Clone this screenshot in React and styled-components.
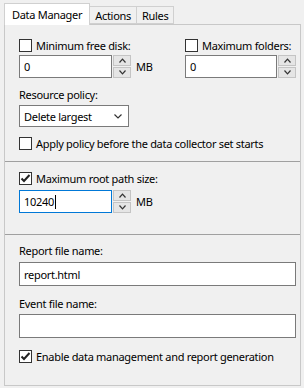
import React from "react";
import styled, { createGlobalStyle } from "styled-components";

const Global = createGlobalStyle`
  html, body {
    margin: 0;
    padding: 0;
    background: #f0f0f0;
  }
  body {
    font-family: "Noto Sans", "DejaVu Sans", sans-serif;
    font-size: 11px;
    letter-spacing: -0.3px;
    color: #000;
  }
`;

const Window = styled.div`
  width: 304px;
  height: 388px;
  padding: 3px 3px 0 4px;
  box-sizing: border-box;
  display: flex;
  flex-direction: column;
`;

const TabStrip = styled.div`
  display: flex;
  align-items: flex-end;
  height: 21px;
  position: relative;
  z-index: 1;
`;

const Tab = styled.div`
  height: ${(p) => (p.$active ? "22px" : "18px")};
  padding: 0 ${(p) => (p.$active ? "7px" : "5px")};
  margin-bottom: ${(p) => (p.$active ? "-1px" : "0")};
  margin-left: ${(p) => (p.$active ? "0" : "-1px")};
  background: ${(p) => (p.$active ? "#ffffff" : "#f0f0f0")};
  border: 1px solid #d0d0d0;
  border-bottom: ${(p) => (p.$active ? "none" : "1px solid #d0d0d0")};
  display: flex;
  align-items: center;
  box-sizing: border-box;
`;

const Panel = styled.div`
  width: 297px;
  height: 362px;
  box-sizing: border-box;
  border: 1px solid #c8c8c8;
  display: flex;
  flex-direction: column;
`;

const Section = styled.div`
  display: flex;
  flex-direction: column;
  padding: ${(p) => p.$pad || "0"} 0 0 14px;
`;

const Separator = styled.div`
  height: 1px;
  background: #a0a0a0;
  margin-top: ${(p) => p.$top || 0}px;
`;

const Columns = styled.div`
  display: grid;
  grid-template-columns: 166px 1fr;
`;

const Field = styled.div`
  display: flex;
  flex-direction: column;
`;

const CheckRow = styled.label`
  display: flex;
  align-items: center;
  gap: 4px;
  height: 16px;
  margin-top: ${(p) => p.$top || 0}px;
  white-space: nowrap;
`;

const Box = styled.span`
  width: 13px;
  height: 13px;
  box-sizing: border-box;
  border: 1px solid #333333;
  background: #ffffff;
  display: inline-flex;
  align-items: center;
  justify-content: center;
  flex: none;
`;

const Label = styled.div`
  height: 16px;
  line-height: 16px;
  margin-top: ${(p) => p.$top || 0}px;
`;

const SpinRow = styled.div`
  display: flex;
  align-items: center;
  margin-top: ${(p) => p.$top || 0}px;
`;

const TextBox = styled.div`
  width: ${(p) => p.$w}px;
  height: ${(p) => p.$h || 23}px;
  box-sizing: border-box;
  background: #ffffff;
  border: 1px solid ${(p) => (p.$focus ? "#0078d7" : "#7a7a7a")};
  display: flex;
  align-items: center;
  padding-left: 4px;
  margin-top: ${(p) => p.$top || 0}px;
`;

const Caret = styled.span`
  display: inline-block;
  width: 1px;
  height: 14px;
  background: #000;
  margin-left: 1px;
`;

const Spinner = styled.div`
  width: 18px;
  height: 23px;
  display: flex;
  flex-direction: column;
  gap: 1px;
  margin-left: 1px;
`;

const SpinBtn = styled.div`
  flex: 1;
  background: #e5e5e5;
  border: 1px solid #c4c4c4;
  display: flex;
  align-items: center;
  justify-content: center;
`;

const Unit = styled.span`
  margin-left: 5px;
`;

const Select = styled.div`
  width: 110px;
  height: 22px;
  box-sizing: border-box;
  background: #ffffff;
  border: 1px solid #7a7a7a;
  display: flex;
  align-items: center;
  justify-content: space-between;
  padding: 0 6px 0 4px;
  margin-top: 2px;
`;

const Check = ({ checked }) => (
  <Box>
    {checked && (
      <svg width="11" height="11" viewBox="0 0 11 11">
        <path d="M1.5 5.5 L4 8 L9.5 2" fill="none" stroke="#222" strokeWidth="2" />
      </svg>
    )}
  </Box>
);

const Arrow = ({ up }) => (
  <svg width="7" height="5" viewBox="0 0 7 5">
    <path d={up ? "M0.5 4.5 L3.5 1.2 L6.5 4.5" : "M0.5 0.5 L3.5 3.8 L6.5 0.5"} fill="none" stroke="#333" strokeWidth="1.2" />
  </svg>
);

const Spin = () => (
  <Spinner>
    <SpinBtn>
      <Arrow up />
    </SpinBtn>
    <SpinBtn>
      <Arrow />
    </SpinBtn>
  </Spinner>
);

export default function App() {
  return (
    <>
      <Global />
      <Window>
        <TabStrip>
          <Tab $active>Data Manager</Tab>
          <Tab>Actions</Tab>
          <Tab>Rules</Tab>
        </TabStrip>
        <Panel>
          <Section $pad="12px">
            <Columns>
              <Field>
                <CheckRow>
                  <Check />
                  Minimum free disk:
                </CheckRow>
                <SpinRow $top={2}>
                  <TextBox $w={93}>0</TextBox>
                  <Spin />
                  <Unit>MB</Unit>
                </SpinRow>
              </Field>
              <Field>
                <CheckRow>
                  <Check />
                  Maximum folders:
                </CheckRow>
                <SpinRow $top={2}>
                  <TextBox $w={92}>0</TextBox>
                  <Spin />
                </SpinRow>
              </Field>
            </Columns>
            <Label $top={9}>Resource policy:</Label>
            <Select>
              Delete largest
              <svg width="8" height="5" viewBox="0 0 8 5">
                <path d="M0.5 0.5 L4 4 L7.5 0.5" fill="none" stroke="#333" strokeWidth="1.2" />
              </svg>
            </Select>
            <CheckRow $top={8}>
              <Check />
              Apply policy before the data collector set starts
            </CheckRow>
          </Section>
          <Separator $top={10} />
          <Section $pad="8px">
            <CheckRow>
              <Check checked />
              Maximum root path size:
            </CheckRow>
            <SpinRow $top={4}>
              <TextBox $w={93} $focus>
                10240
                <Caret />
              </TextBox>
              <Spin />
              <Unit>MB</Unit>
            </SpinRow>
          </Section>
          <Separator $top={21} />
          <Section $pad="8px">
            <Label>Report file name:</Label>
            <TextBox $w={277} $h={24} $top={3}>
              report.html
            </TextBox>
            <Label $top={10}>Event file name:</Label>
            <TextBox $w={277} $h={24} $top={2} />
            <CheckRow $top={10}>
              <Check checked />
              Enable data management and report generation
            </CheckRow>
          </Section>
        </Panel>
      </Window>
    </>
  );
}
